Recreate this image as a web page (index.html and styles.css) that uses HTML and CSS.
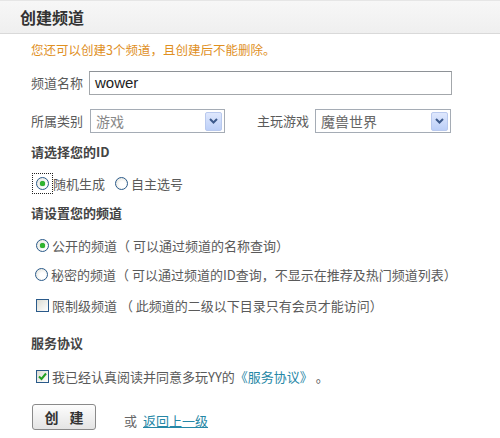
FILE: index.html
```html
<!DOCTYPE html>
<html lang="zh">
<head>
<meta charset="utf-8">
<title>创建频道</title>
<link rel="stylesheet" href="styles.css">
</head>
<body>
<div class="header"><h1 class="title">创建频道</h1></div>
<div class="content">
  <p class="notice">您还可以创建3个频道，且创建后不能删除。</p>
  <div class="row row-name">
    <span class="label">频道名称</span>
    <div class="input">wower</div>
  </div>
  <div class="row row-select">
    <span class="label">所属类别</span>
    <div class="select select-cat"><span class="val">游戏</span><span class="arrow"><svg width="9" height="6" viewBox="0 0 9 6"><path d="M1 1 L4.5 4.5 L8 1" fill="none" stroke="#3d5a8c" stroke-width="2"/></svg></span></div>
    <span class="label label-game">主玩游戏</span>
    <div class="select select-game"><span class="val">魔兽世界</span><span class="arrow"><svg width="9" height="6" viewBox="0 0 9 6"><path d="M1 1 L4.5 4.5 L8 1" fill="none" stroke="#3d5a8c" stroke-width="2"/></svg></span></div>
  </div>
  <h2 class="sub sub-id">请选择您的ID</h2>
  <div class="opts-id">
    <span class="focus"><span class="radio on"></span></span><span class="txt">随机生成</span>
    <span class="radio r2"></span><span class="txt">自主选号</span>
  </div>
  <h2 class="sub sub-ch">请设置您的频道</h2>
  <div class="opt opt1"><span class="radio on"></span><span class="txt">公开的频道（ 可以通过频道的名称查询）</span></div>
  <div class="opt opt2"><span class="radio"></span><span class="txt">秘密的频道（ 可以通过频道的ID查询，不显示在推荐及热门频道列表）</span></div>
  <div class="opt opt3"><span class="check"></span><span class="txt">限制级频道 （ 此频道的二级以下目录只有会员才能访问）</span></div>
  <h2 class="sub sub-agree">服务协议</h2>
  <div class="opt opt4"><span class="check on"><svg width="11" height="11" viewBox="0 0 11 11"><path d="M2 5.5 L4.5 8 L9 2.5" fill="none" stroke="#22a022" stroke-width="2"/></svg></span><span class="txt">我已经认真阅读并同意多玩YY的<a class="link-plain" href="#">《服务协议》</a> 。</span></div>
  <div class="actions">
    <button class="btn">创 建</button>
    <span class="or">或</span>
    <a class="back" href="#">返回上一级</a>
  </div>
</div>
</body>
</html>
```
FILE: styles.css
```css
* { box-sizing: border-box; }
html, body { margin: 0; padding: 0; background: #fff; }
body {
  width: 500px;
  height: 438px;
  overflow: hidden;
  font-family: "Noto Sans CJK SC", "Noto Sans", "Liberation Sans", sans-serif;
  font-size: 13px;
  color: #5a5a5a;
}
.header {
  height: 34px;
  background: linear-gradient(#f7f7f7, #efefef);
  border-top: 1px solid #e6e6e6;
  border-bottom: 1px solid #d9d9d9;
  display: flex;
  align-items: center;
  padding-left: 20px;
}
.title {
  margin: 0;
  font-size: 16px;
  font-weight: bold;
  color: #333;
  line-height: 18px;
}
.content { padding-left: 31px; }
.notice {
  margin: 8px 0 0;
  line-height: 16px;
  font-size: 12.5px;
  color: #e0901f;
}
.row { display: flex; align-items: center; height: 24px; }
.row-name { margin-top: 13px; }
.row-select { margin-top: 14px; }
.label { width: 58px; flex: none; line-height: 24px; }
.input {
  width: 363px;
  height: 24px;
  border: 1px solid #a3a7ab;
  border-top-color: #8e9297;
  font-family: "Liberation Sans", Arial, sans-serif;
  font-size: 15px;
  color: #222;
  padding-left: 5px;
  line-height: 22px;
}
.select {
  height: 24px;
  border: 1px solid #a5acb5;
  display: flex;
  align-items: center;
  justify-content: space-between;
  padding: 0 2px 0 5px;
}
.select .val { color: #888; font-size: 14px; }
.select-cat { width: 135px; margin-left: 1px; }
.select-game { width: 136px; }
.select-game .val { color: #666; }
.label-game { width: auto; margin-left: 32px; margin-right: 6px; }
.arrow {
  width: 17px;
  height: 19px;
  border: 1px solid #b9c9ee;
  border-radius: 2px;
  background: linear-gradient(#dfe8fd, #bccff8);
  display: flex;
  align-items: center;
  justify-content: center;
}
.sub {
  margin: 0;
  font-size: 13px;
  font-weight: bold;
  color: #444;
  line-height: 16px;
}
.sub-id { margin-top: 11px; }
.sub-ch { margin-top: 11px; }
.sub-agree { margin-top: 20px; }
.opts-id {
  margin-top: 13px;
  height: 21px;
  display: flex;
  align-items: center;
}
.focus {
  width: 21px;
  height: 21px;
  border: 1px dotted #222;
  display: flex;
  align-items: center;
  justify-content: center;
  margin-left: 1px;
}
.radio {
  width: 13px;
  height: 13px;
  border-radius: 50%;
  border: 1px solid #2a5a8a;
  background: radial-gradient(circle at 60% 60%, #fff 30%, #dcdcd3 100%);
  flex: none;
  position: relative;
}
.radio.on::after {
  content: "";
  position: absolute;
  left: 3px; top: 3px;
  width: 5px; height: 5px;
  border-radius: 50%;
  background: #2fb52f;
  box-shadow: 0 0 1px #1a7a1a;
}
.opts-id .txt { margin-left: 0; }
.r2 { margin-left: 10px; }
.opts-id .r2 + .txt { margin-left: 3px; }
.opt {
  display: flex;
  align-items: center;
  height: 20px;
  padding-left: 5px;
}
.opt .txt { margin-left: 3px; white-space: nowrap; }
.opt1 { margin-top: 14px; }
.opt2 { margin-top: 9px; padding-left: 4px; }
.opt3 { margin-top: 11px; }
.opt4 { margin-top: 15px; }
.check {
  width: 13px;
  height: 13px;
  border: 1px solid #2a5a8a;
  background: linear-gradient(135deg, #dcdcd3, #fff);
  flex: none;
  display: flex;
  align-items: center;
  justify-content: center;
}
.link-plain { color: #2687a6; text-decoration: none; }
.actions {
  margin-top: 18px;
  display: flex;
  align-items: center;
  height: 26px;
}
.btn {
  width: 64px;
  height: 26px;
  margin-left: 1px;
  border: 1px solid #8a8a8a;
  border-radius: 3px;
  background: linear-gradient(#fdfdfd, #e4e4e4);
  font-family: "Noto Sans CJK SC", sans-serif;
  font-size: 14px;
  font-weight: bold;
  color: #333;
  padding: 0;
  word-spacing: 8px;
}
.or { margin-left: 28px; margin-top: 6px; color: #666; }
.back { margin-left: 6px; margin-top: 6px; color: #2687a6; text-decoration: underline; }
```
